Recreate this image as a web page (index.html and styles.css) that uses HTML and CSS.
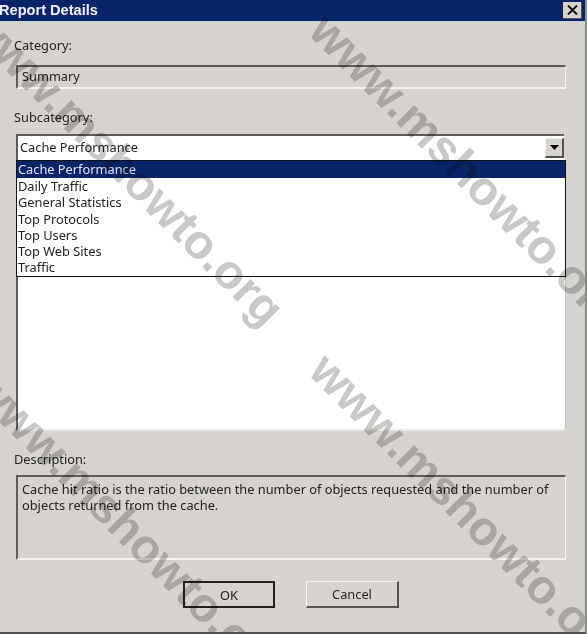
FILE: index.html
```html
<!DOCTYPE html>
<html lang="en">
<head>
<meta charset="utf-8">
<title>Report Details</title>
<link rel="stylesheet" href="styles.css">
</head>
<body>
<div class="dialog">
  <header class="titlebar">
    <span class="title">Report Details</span>
    <span class="close" aria-label="Close">
      <svg width="11" height="10" viewBox="0 0 11 10"><path d="M1 0.5 L10 9.5 M10 0.5 L1 9.5" stroke="#111" stroke-width="2" fill="none"/></svg>
    </span>
  </header>
  <main class="body">
    <div class="label label-category">Category:</div>
    <div class="readonly summary">Summary</div>
    <div class="label label-sub">Subcategory:</div>
    <div class="combo">
      <span class="combo-value">Cache Performance</span>
      <span class="combo-btn"><svg width="9" height="5" viewBox="0 0 9 5"><path d="M0 0 H9 L4.5 5 Z" fill="#000"/></svg></span>
    </div>
    <div class="listarea">
      <ul class="dropdown">
        <li class="selected">Cache Performance</li>
        <li>Daily Traffic</li>
        <li>General Statistics</li>
        <li>Top Protocols</li>
        <li>Top Users</li>
        <li>Top Web Sites</li>
        <li>Traffic</li>
      </ul>
    </div>
    <div class="label label-desc">Description:</div>
    <div class="readonly description">Cache hit ratio is the ratio between the number of objects requested and the number of objects returned from the cache.</div>
    <div class="buttons">
      <button class="btn btn-default" type="button">OK</button>
      <button class="btn btn-cancel" type="button">Cancel</button>
    </div>
  </main>
  <div class="mark mark-a">www.mshowto.org</div>
  <div class="mark mark-b">www.mshowto.org</div>
  <div class="mark mark-c">www.mshowto.org</div>
  <div class="mark mark-d">www.mshowto.org</div>
</div>
</body>
</html>
```
FILE: styles.css
```css
* { box-sizing: border-box; }
html, body { margin: 0; padding: 0; }
body { width: 587px; height: 634px; overflow: hidden; background: #fff; }
.dialog {
  position: relative;
  width: 587px;
  height: 634px;
  overflow: hidden;
  background: #d6d3ce;
  border-right: 2px solid #8d8b86;
  border-bottom: 2px solid #55534f;
  font-family: "Noto Sans", "Liberation Sans", sans-serif;
  font-size: 12.8px;
  color: #222;
  filter: blur(0.35px);
}
.titlebar {
  height: 22px;
  background: #0a246a;
  border-bottom: 1px solid #c9d0dd;
  display: flex;
  align-items: center;
  justify-content: space-between;
  padding: 0 3px 1px 0;
}
.title {
  margin-left: -1px;
  font-family: "Liberation Sans", sans-serif;
  font-weight: bold;
  font-size: 14.6px;
  color: #eef0f5;
}
.close {
  width: 19px;
  height: 17px;
  background: #d6d3ce;
  border-right: 1px solid #555;
  border-bottom: 1px solid #555;
  display: flex;
  align-items: center;
  justify-content: center;
}
.body { padding: 0 0 0 16px; width: 550px; box-sizing: content-box; }
.label { line-height: 16px; }
.label-category { margin: 15px 0 0 -2px; }
.label-sub { margin: 20px 0 0 -2px; }
.label-desc { margin: 20px 0 0 -2px; }
.readonly {
  border-top: 2px solid #5e5c58;
  border-left: 2px solid #5e5c58;
  border-right: 1px solid #f4f3f0;
  border-bottom: 2px solid #f4f3f0;
}
.summary { margin-top: 12px; height: 24px; padding: 1px 0 0 4px; line-height: 17px; }
.combo {
  margin-top: 9px;
  width: 548px;
  height: 25px;
  background: #fff;
  border-top: 2px solid #5e5c58;
  border-left: 2px solid #5e5c58;
  display: flex;
  align-items: center;
  justify-content: space-between;
  padding-left: 2px;
}
.combo-value { line-height: 17px; }
.combo-btn {
  width: 19px;
  height: 20px;
  background: #d6d3ce;
  border-right: 2px solid #55534f;
  border-bottom: 2px solid #55534f;
  border-top: 1px solid #f4f3f0;
  border-left: 1px solid #f4f3f0;
  display: flex;
  align-items: center;
  justify-content: center;
}
.listarea {
  position: relative;
  height: 272px;
  background: #fff;
  border-left: 2px solid #5e5c58;
  border-right: 1px solid #c4c2bd;
  border-bottom: 2px solid #ecebe7;
}
.dropdown {
  position: absolute;
  top: 1px;
  left: -2px;
  right: -1px;
  margin: 0;
  padding: 0;
  list-style: none;
  background: #fff;
  border: 1px solid #111;
  height: 117px;
}
.dropdown li { height: 16.3px; line-height: 16.3px; padding-left: 1px; }
.dropdown .selected { background: #0a246a; color: #dfe4f0; height: 17px; }
.description {
  margin-top: 8px;
  height: 85px;
  padding: 4px 6px 0 4px;
  line-height: 16px;
}
.buttons {
  margin: 21px 0 0 167px;
  display: flex;
  gap: 31px;
}
.btn {
  width: 92px;
  height: 27px;
  padding: 0;
  font: inherit;
  color: #222;
  background: #d6d3ce;
  border-top: 1px solid #f4f3f0;
  border-left: 1px solid #f4f3f0;
  border-right: 2px solid #55534f;
  border-bottom: 2px solid #55534f;
}
.btn-default { border: 2px solid #222; }
.btn-cancel { width: 93px; }
.mark {
  position: absolute;
  width: 450px;
  font-family: "Liberation Sans", sans-serif;
  font-weight: bold;
  font-size: 48px;
  line-height: 50px;
  white-space: nowrap;
  color: #c9c8c7;
  mix-blend-mode: multiply;
  transform-origin: 0 50%;
  transform: rotate(45deg);
  pointer-events: none;
}
.mark-a { left: -25px; top: -8px; }
.mark-b { left: 318px; top: -3px; }
.mark-c { left: 318px; top: 337px; }
.mark-d { left: -20px; top: 355px; }
```
